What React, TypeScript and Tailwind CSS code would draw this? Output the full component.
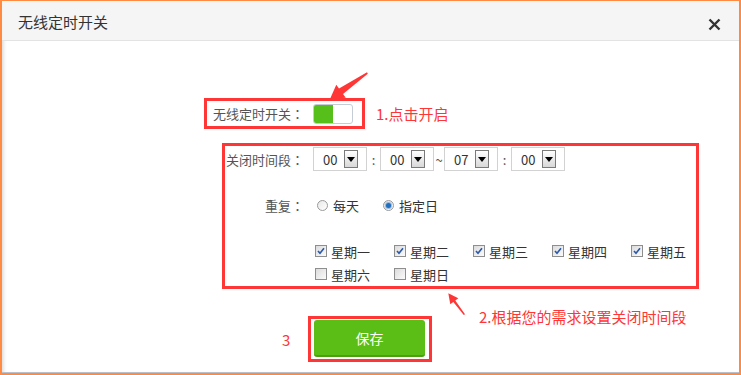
import React from "react";

const RED = "#ff3636";

function Colon() {
  return <span style={{ fontFamily: '"Noto Sans CJK TC", sans-serif' }}>：</span>;
}

function Select({ value }: { value: string }) {
  return (
    <div className="w-[54px] h-[24px] border border-[#d2d2d2] bg-white flex items-center">
      <span className="pl-[9px] text-[13px] text-[#333] leading-none">{value}</span>
      <div className="ml-auto mr-[8px] w-[14px] h-[18px] border border-[#7a7a7a] bg-gradient-to-b from-[#ffffff] to-[#d8d8d8] flex items-center justify-center">
        <svg width="8" height="5" viewBox="0 0 8 5">
          <polygon points="0,0 8,0 4,5" fill="#000" />
        </svg>
      </div>
    </div>
  );
}

function Radio({ checked }: { checked?: boolean }) {
  return (
    <div className="w-[11px] h-[11px] rounded-full border border-[#9a9a9a] bg-gradient-to-br from-[#e8e8e8] to-[#ffffff] flex items-center justify-center">
      {checked && <div className="w-[5px] h-[5px] rounded-full bg-[#1f6fc0] shadow-[0_0_1px_1px_rgba(40,110,190,0.5)]" />}
    </div>
  );
}

function Check({ checked }: { checked?: boolean }) {
  return (
    <div className="w-[12px] h-[12px] border border-[#8e8e8e] bg-gradient-to-br from-[#dcdcdc] to-[#fbfbfb] flex items-center justify-center">
      {checked && (
        <svg width="8" height="8" viewBox="0 0 8 8">
          <path d="M1 4 L3 6.3 L7 1.2" stroke="#2b58a8" strokeWidth="1.6" fill="none" />
        </svg>
      )}
    </div>
  );
}

export default function App() {
  const days: [string, boolean][] = [
    ["星期一", true],
    ["星期二", true],
    ["星期三", true],
    ["星期四", true],
    ["星期五", true],
    ["星期六", false],
    ["星期日", false],
  ];
  return (
    <div
      className="relative w-[741px] h-[375px] box-border border-[#ff8a42] border-l-2 border-r-2 border-t border-b-2 bg-white overflow-hidden"
      style={{ fontFamily: '"Noto Sans CJK SC", "Noto Sans", sans-serif' }}
    >
      <div className="h-full flex flex-col border-b border-[#b9c0cc] shadow-[inset_4px_0_4px_-3px_rgba(0,0,0,0.18)]">
        {/* header */}
        <div className="h-[40px] shrink-0 bg-[#f5f5f5] border-b border-[#e3e3e3] flex items-center px-[16px]">
          <span className="text-[15px] text-[#333] leading-none mt-[1px]">无线定时开关</span>
          <svg className="ml-auto mt-[8px] mr-[2px]" width="13" height="13" viewBox="0 0 13 13">
            <path d="M1.5 1.5 L11.5 11.5 M11.5 1.5 L1.5 11.5" stroke="#333" strokeWidth="2.4" />
          </svg>
        </div>

        {/* row 1 */}
        <div className="mt-[57px] ml-[202px] flex items-center">
          <div className="w-[161px] h-[31px] border-[3px] border-[#ff3636] flex items-center pl-[6px]">
            <span className="text-[13px] text-[#555] leading-none">无线定时开关<Colon /></span>
            <div className="ml-[9px] w-[40px] h-[20px] rounded-[3px] border border-[#c5ccd6] bg-white overflow-hidden flex">
              <div className="w-[19px] h-full bg-[#56bf1a]" />
            </div>
          </div>
          <span className="ml-[11px] text-[15px] text-[#ff3636] leading-none">1.点击开启</span>
        </div>

        {/* box 2 */}
        <div className="mt-[14px] ml-[220px] w-[477px] h-[146px] border-[3px] border-[#ff3636] flex flex-col">
          <div className="mt-[1px] h-[24px] flex items-center">
            <div className="w-[88px] pl-[1px] text-[13px] text-[#555] leading-none">关闭时间段<Colon /></div>
            <Select value="00" />
            <span className="w-[13px] text-center text-[13px] text-[#555] leading-none">:</span>
            <Select value="00" />
            <span className="w-[10px] text-center text-[13px] text-[#555] leading-none">~</span>
            <Select value="07" />
            <span className="w-[13px] text-center text-[13px] text-[#555] leading-none">:</span>
            <Select value="00" />
          </div>

          <div className="mt-[24px] h-[20px] flex items-center">
            <div className="w-[88px] pr-[9px] text-right text-[13px] text-[#555] leading-none">重复<Colon /></div>
            <div className="ml-[4px] flex items-center">
              <Radio />
              <span className="ml-[5px] text-[13px] text-[#333] leading-none">每天</span>
            </div>
            <div className="ml-[24px] flex items-center">
              <Radio checked />
              <span className="ml-[5px] text-[13px] text-[#333] leading-none">指定日</span>
            </div>
          </div>

          <div className="mt-[25px] ml-[90px] grid grid-cols-[79px_79px_79px_79px_79px] gap-y-[1px]">
            {days.map(([d, c]) => (
              <div key={d} className="h-[22px] flex items-center">
                <Check checked={c} />
                <span className="ml-[4px] text-[13px] text-[#333] leading-none">{d}</span>
              </div>
            ))}
          </div>
        </div>

        {/* save row */}
        <div className="mt-[27px] ml-[280px] flex items-center">
          <span className="w-[26px] text-[15px] text-[#ff3636] leading-none">3</span>
          <div className="w-[124px] h-[46px] border-[3px] border-[#ff3636] pl-[3px] pt-[1px]">
            <div className="w-[111px] h-[37px] rounded-[3px] bg-[#5abe16] border-b-2 border-[#4c9e13] flex items-center justify-center">
              <span className="text-[14px] text-white leading-none">保存</span>
            </div>
          </div>
        </div>
      </div>

      {/* annotation 2 */}
      <span className="absolute left-[477px] top-[306px] text-[15px] text-[#ff3636] leading-[20px] whitespace-nowrap">
        2.根据您的需求设置关闭时间段
      </span>

      {/* arrows */}
      <svg className="absolute left-[-2px] top-[-1px] pointer-events-none" width="741" height="375" viewBox="0 0 741 375">
        <polygon
          points="330,99 336.3,84.8 339,88.4 367,72.3 367.8,73.8 343,94 345.8,97.8"
          fill={RED}
        />
        <polygon
          points="448.3,293.3 458.3,298.3 455.3,300.6 465,314.2 463.8,315 453.3,302 450.3,304.3"
          fill={RED}
        />
      </svg>
    </div>
  );
}
